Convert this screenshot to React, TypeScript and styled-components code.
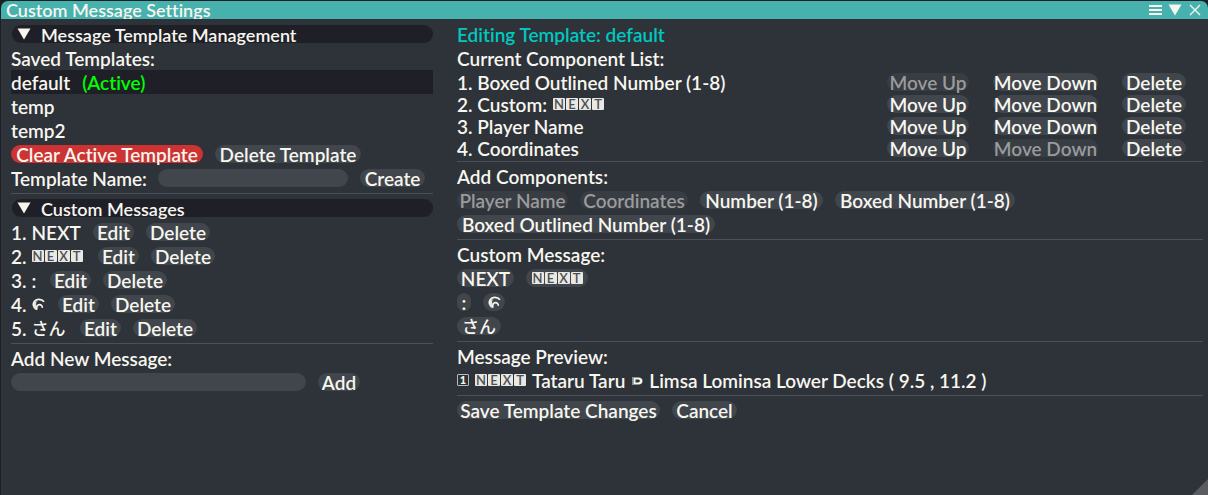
import React, { useState } from 'react';
import styled, { createGlobalStyle } from 'styled-components';

const color = {
  panel: '#2e3239',
  title: '#46b1ad',
  header: '#1f1f27',
  control: '#41454c',
  controlOff: '#383c43',
  text: '#f7f6ef',
  textOff: '#9a9b9b',
  line: '#4d5058',
  danger: '#cd3333',
  editing: '#00c8c0',
  active: '#00ff00',
  grip: '#5a5c60',
};

const GlobalStyle = createGlobalStyle`
  *, *::before, *::after { box-sizing: border-box; }
  body { margin: 0; background: #1d1f24; }
  body, button, input {
    font-family: Lato, "Noto Sans CJK JP", sans-serif;
    font-size: 19px;
    font-weight: 600;
    font-variant-ligatures: none;
    line-height: 20px;
    color: ${color.text};
  }
`;

const Window = styled.main`
  position: relative;
  display: flex;
  flex-direction: column;
  min-height: 100vh;
  padding: 1px 0 0 1px;
`;

const TitleBar = styled.header`
  display: flex;
  align-items: center;
  justify-content: space-between;
  height: 18px;
  padding: 0 6px 0 5px;
  background: ${color.title};
  border-radius: 7px 7px 0 0;
`;

const Title = styled.h1`
  margin: 0;
  font-size: 18px;
  font-weight: 600;
  line-height: 20px;
  white-space: nowrap;
`;

const TitleActions = styled.div`
  display: flex;
  align-items: center;
  gap: 6px;
`;

const IconButton = styled.button`
  display: flex;
  padding: 0;
  border: 0;
  background: none;
  cursor: pointer;
`;

const Body = styled.div`
  flex: 1;
  display: grid;
  grid-template-columns: minmax(0, 422fr) minmax(0, 746fr);
  column-gap: 24px;
  align-items: start;
  padding: 6px 5px 6px 10px;
  background: ${color.panel};
`;

const Column = styled.section`
  display: flex;
  flex-direction: column;
  gap: 6px;
`;

const Line = styled.hr`
  width: 100%;
  height: 1px;
  margin: 0 0 -1px;
  border: 0;
  background: ${color.line};
`;

const Header = styled.button`
  display: flex;
  align-items: center;
  gap: 10px;
  height: 18px;
  margin-left: 1px;
  padding: 2px 5px 0;
  border: 0;
  border-radius: 9px;
  background: ${color.header};
  font-size: 18px;
  text-align: left;
  white-space: nowrap;
  cursor: pointer;

  svg { margin-bottom: 2px; }
`;

const Caption = styled.h2<{ $tone?: string }>`
  height: 18px;
  margin: 0;
  font-size: inherit;
  font-weight: inherit;
  color: ${(p) => p.$tone ?? color.text};
`;

const Row = styled.div`
  display: flex;
  flex-wrap: wrap;
  align-items: center;
  gap: 6px 12px;
`;

const Button = styled.button<{ $w: number; $danger?: boolean }>`
  display: inline-flex;
  align-items: center;
  justify-content: center;
  width: ${(p) => p.$w}px;
  height: 18px;
  padding: 2px 0 0;
  border: 0;
  border-radius: 9px;
  background: ${(p) => (p.$danger ? color.danger : color.control)};
  white-space: nowrap;
  cursor: pointer;

  svg { margin-bottom: 2px; }

  &:disabled {
    background: ${color.controlOff};
    color: ${color.textOff};
    cursor: default;
  }
`;

const TemplateList = styled.ul`
  margin: -3px 0;
  padding: 0;
  list-style: none;
`;

const TemplateItem = styled.button<{ $selected: boolean }>`
  display: flex;
  align-items: center;
  gap: 12px;
  width: 100%;
  height: 24px;
  padding: 2px 0 0;
  border: 0;
  background: ${(p) => (p.$selected ? color.header : 'none')};
  text-align: left;
  cursor: pointer;
`;

const ActiveMark = styled.span`
  color: ${color.active};
`;

const FieldLabel = styled.label`
  width: 135px;
  height: 18px;
  white-space: nowrap;
`;

const BlockLabel = styled.label`
  height: 18px;
`;

const Field = styled.input<{ $w: number }>`
  width: ${(p) => p.$w}px;
  height: 18px;
  padding: 0 6px;
  border: 0;
  border-radius: 9px;
  outline: 0;
  background: ${color.control};
`;

const MessageList = styled.ul`
  display: flex;
  flex-direction: column;
  gap: 6px;
  margin: 0;
  padding: 0;
  list-style: none;
`;

const MessageLabel = styled.span<{ $w: number }>`
  display: flex;
  align-items: center;
  gap: 5px;
  width: ${(p) => p.$w}px;
  height: 18px;
  padding-top: 2px;
  white-space: nowrap;

  svg { margin-bottom: 2px; }
`;

const ComponentTable = styled.table`
  width: 100%;
  margin-bottom: -6px;
  border-collapse: collapse;
  table-layout: fixed;

  td {
    height: 22px;
    padding: 0 0 4px;
    line-height: 18px;
    vertical-align: top;
  }
  td:nth-child(2) { width: 106px; }
  td:nth-child(3) { width: 129px; }
  td:nth-child(4) { width: 81px; }
  button { vertical-align: top; }
`;

const InlineText = styled.span`
  display: flex;
  align-items: center;
  gap: 6px;
  height: 18px;
  padding-top: 2px;
  white-space: nowrap;

  svg { margin-bottom: 1px; }
`;

const Tiles = styled.span`
  display: inline-flex;
  gap: 1px;
  margin-bottom: 2px;
`;

const Tile = styled.span`
  width: 12px;
  height: 12px;
  border-radius: 1px;
  background: #e9e8e2;
  color: #4c4f56;
  font-size: 13px;
  font-weight: 600;
  line-height: 12px;
  text-align: center;
`;

const OutlineTile = styled.span`
  width: 12px;
  height: 12px;
  margin-bottom: 2px;
  border: 1px solid #b9b9b6;
  border-radius: 1px;
  font-size: 11px;
  font-weight: 900;
  line-height: 10px;
  text-align: center;
`;

const Kana = styled.span`
  font-size: 17px;
  font-weight: 500;
`;

const Grip = styled.svg`
  position: absolute;
  right: 0;
  bottom: 0;
`;

const TriangleIcon = () => (
  <svg width="14" height="12" viewBox="0 0 14 12" aria-hidden="true">
    <path d="M0.5 0.5H13.5L7 11.5Z" fill={color.text} />
  </svg>
);

const MoonIcon = () => (
  <svg width="13" height="13" viewBox="0 0 13 13" aria-label="moon">
    <path
      d="M1.900 8.500C0.600 4.600 3 1.500 6.400 1.400 8.800 1.300 10.800 2.200 12 3.800"
      fill="none"
      stroke={color.text}
      strokeWidth="1.800"
    />
    <path
      d="M0.700 5.500C0.400 9 2 11.600 4.800 12.300 4 10.800 4 9.200 4.800 8 3.600 6.600 3.900 4.200 6 2.600Z"
      fill={color.text}
      opacity="0.900"
    />
    <path
      d="M4.900 11.800C4.200 8.800 5.400 6.700 7.400 6.600 9.200 6.500 10.400 7.800 10.300 9.900"
      fill="none"
      stroke={color.text}
      strokeWidth="1.600"
    />
  </svg>
);

const LinkMarkIcon = () => (
  <svg width="12" height="8" viewBox="0 0 12 8" aria-label="location">
    <path d="M1 0.500H7.500C10 0.500 11.500 2 11.500 4S10 7.500 7.500 7.500H1Z" fill={color.text} />
    <path d="M1 0.500H2.800V7.500H1Z" fill="#8d8f90" />
    <path d="M4.500 2.600H7C8.200 2.600 8.800 3.200 8.800 4S8.200 5.400 7 5.400H4.500Z" fill={color.panel} />
  </svg>
);

const BoxedWord = ({ word }: { word: string }) => (
  <Tiles>
    {word.split('').map((letter) => (
      <Tile key={letter}>{letter}</Tile>
    ))}
  </Tiles>
);

const templates = ['default', 'temp', 'temp2'];

const messages = [
  { content: 'NEXT', width: 70 },
  { content: <BoxedWord word="NEXT" />, width: 75 },
  { content: ':', width: 27 },
  { content: <MoonIcon />, width: 35 },
  { content: <Kana>さん</Kana>, width: 57 },
];

const components = [
  <>1. Boxed Outlined Number (1-8)</>,
  <>2. Custom: <BoxedWord word="NEXT" /></>,
  <>3. Player Name</>,
  <>4. Coordinates</>,
];

export default function App() {
  const [selected, setSelected] = useState('default');

  return (
    <>
      <GlobalStyle />
      <Window>
        <TitleBar>
          <Title>Custom Message Settings</Title>
          <TitleActions>
            <IconButton aria-label="Menu">
              <svg width="14" height="12" viewBox="0 0 14 12">
                <path d="M1 2H14M1 6H14M1 10H14" stroke={color.text} strokeWidth="2" />
              </svg>
            </IconButton>
            <IconButton aria-label="Collapse">
              <TriangleIcon />
            </IconButton>
            <IconButton aria-label="Close">
              <svg width="14" height="12" viewBox="0 0 14 12">
                <path d="M2 1L12 11M12 1L2 11" stroke={color.text} strokeWidth="1.300" />
              </svg>
            </IconButton>
          </TitleActions>
        </TitleBar>

        <Body>
          <Column>
            <Header aria-expanded="true">
              <TriangleIcon />
              Message Template Management
            </Header>
            <Caption>Saved Templates:</Caption>
            <TemplateList>
              {templates.map((name) => (
                <li key={name}>
                  <TemplateItem $selected={name === selected} onClick={() => setSelected(name)}>
                    {name}
                    {name === 'default' && <ActiveMark>(Active)</ActiveMark>}
                  </TemplateItem>
                </li>
              ))}
            </TemplateList>
            <Row>
              <Button $w={192} $danger>Clear Active Template</Button>
              <Button $w={146}>Delete Template</Button>
            </Row>
            <Row>
              <FieldLabel htmlFor="template-name">Template Name:</FieldLabel>
              <Field id="template-name" type="text" $w={190} />
              <Button $w={65}>Create</Button>
            </Row>
            <Line />
            <Header aria-expanded="true">
              <TriangleIcon />
              Custom Messages
            </Header>
            <MessageList>
              {messages.map((message, i) => (
                <li key={i}>
                  <Row>
                    <MessageLabel $w={message.width}>
                      <span>{i + 1}.</span>
                      {message.content}
                    </MessageLabel>
                    <Button $w={41}>Edit</Button>
                    <Button $w={64}>Delete</Button>
                  </Row>
                </li>
              ))}
            </MessageList>
            <Line />
            <BlockLabel htmlFor="new-message">Add New Message:</BlockLabel>
            <Row>
              <Field id="new-message" type="text" $w={295} />
              <Button $w={42}>Add</Button>
            </Row>
          </Column>

          <Column>
            <Caption $tone={color.editing}>Editing Template: default</Caption>
            <Caption>Current Component List:</Caption>
            <ComponentTable>
              <tbody>
                {components.map((label, i) => (
                  <tr key={i}>
                    <td><InlineText>{label}</InlineText></td>
                    <td><Button $w={82} disabled={i === 0}>Move Up</Button></td>
                    <td><Button $w={105} disabled={i === components.length - 1}>Move Down</Button></td>
                    <td><Button $w={64}>Delete</Button></td>
                  </tr>
                ))}
              </tbody>
            </ComponentTable>
            <Line />
            <Caption>Add Components:</Caption>
            <Row>
              <Button $w={111} disabled>Player Name</Button>
              <Button $w={108} disabled>Coordinates</Button>
              <Button $w={123}>Number (1-8)</Button>
              <Button $w={180}>Boxed Number (1-8)</Button>
              <Button $w={258}>Boxed Outlined Number (1-8)</Button>
            </Row>
            <Line />
            <Caption>Custom Message:</Caption>
            <Row>
              <Button $w={57}>NEXT</Button>
              <Button $w={62}><BoxedWord word="NEXT" /></Button>
            </Row>
            <Row>
              <Button $w={14}>:</Button>
              <Button $w={22}><MoonIcon /></Button>
            </Row>
            <Row>
              <Button $w={44}><Kana>さん</Kana></Button>
            </Row>
            <Line />
            <Caption>Message Preview:</Caption>
            <InlineText>
              <OutlineTile>1</OutlineTile>
              <BoxedWord word="NEXT" />
              <span>Tataru Taru</span>
              <LinkMarkIcon />
              <span>Limsa Lominsa Lower Decks ( 9.5 , 11.2 )</span>
            </InlineText>
            <Line />
            <Row>
              <Button $w={203}>Save Template Changes</Button>
              <Button $w={65}>Cancel</Button>
            </Row>
          </Column>
        </Body>
        <Grip width="16" height="16" viewBox="0 0 16 16" aria-hidden="true">
          <path d="M16 0V16H0Z" fill={color.grip} />
        </Grip>
      </Window>
    </>
  );
}
